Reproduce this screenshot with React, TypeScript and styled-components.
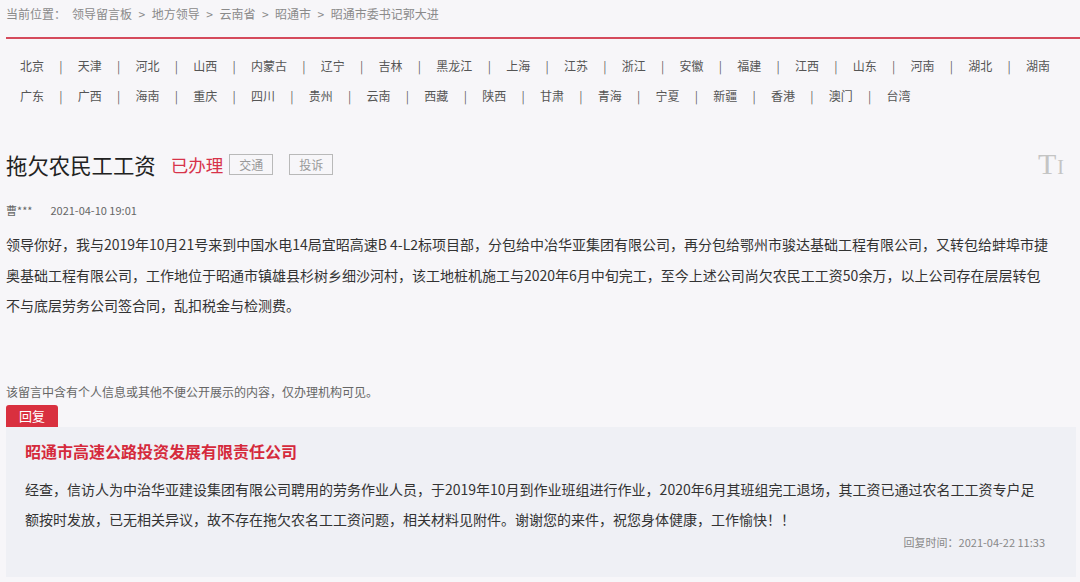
import React from "react";
import styled, { createGlobalStyle } from "styled-components";

const GlobalStyle = createGlobalStyle`
  body {
    margin: 0;
    background: #f7f6f9;
    font-family: "Noto Sans CJK SC", "Noto Sans", sans-serif;
  }
`;

const crumbs = ["领导留言板", "地方领导", "云南省", "昭通市", "昭通市委书记郭大进"];
const rowOne = ["北京", "天津", "河北", "山西", "内蒙古", "辽宁", "吉林", "黑龙江", "上海", "江苏", "浙江", "安徽", "福建", "江西", "山东", "河南", "湖北", "湖南"];
const rowTwo = ["广东", "广西", "海南", "重庆", "四川", "贵州", "云南", "西藏", "陕西", "甘肃", "青海", "宁夏", "新疆", "香港", "澳门", "台湾"];

function ProvinceRow({ names }: { names: string[] }) {
  return (
    <Row>
      {names.map((n, i) => (
        <React.Fragment key={n}>
          <Province>{n}</Province>
          {i < names.length - 1 && <Sep>|</Sep>}
        </React.Fragment>
      ))}
    </Row>
  );
}

function App() {
  return (
    <Page>
      <GlobalStyle />
      <Crumb>
        <CrumbLabel>当前位置：</CrumbLabel>
        {crumbs.map((c, i) => (
          <React.Fragment key={c}>
            {i > 0 && <Arrow>&gt;</Arrow>}
            <span>{c}</span>
          </React.Fragment>
        ))}
      </Crumb>

      <Provinces>
        <ProvinceRow names={rowOne} />
        <ProvinceRow names={rowTwo} />
      </Provinces>

      <TitleRow>
        <TitleLeft>
          <Title>拖欠农民工工资</Title>
          <Status>已办理</Status>
          <Tag>交通</Tag>
          <Tag>投诉</Tag>
        </TitleLeft>
        <FontIcon>
          <BigT>T</BigT>
          <SmallI>I</SmallI>
        </FontIcon>
      </TitleRow>

      <Meta>
        <span>曹***</span>
        <span>2021-04-10 19:01</span>
      </Meta>

      <Body>
        领导你好，我与2019年10月21号来到中国水电14局宜昭高速B 4-L2标项目部，分包给中冶华亚集团有限公司，再分包给鄂州市骏达基础工程有限公司，又转包给蚌埠市捷奥基础工程有限公司，工作地位于昭通市镇雄县杉树乡细沙河村，该工地桩机施工与2020年6月中旬完工，至今上述公司尚欠农民工工资50余万，以上公司存在层层转包
        <br />
        不与底层劳务公司签合同，乱扣税金与检测费。
      </Body>

      <Notice>该留言中含有个人信息或其他不便公开展示的内容，仅办理机构可见。</Notice>

      <ReplyTab>回复</ReplyTab>
      <ReplyBox>
        <ReplyOrg>昭通市高速公路投资发展有限责任公司</ReplyOrg>
        <ReplyText>
          经查，信访人为中治华亚建设集团有限公司聘用的劳务作业人员，于2019年10月到作业班组进行作业，2020年6月其班组完工退场，其工资已通过农名工工资专户足额按时发放，已无相关异议，故不存在拖欠农名工工资问题，相关材料见附件。谢谢您的来件，祝您身体健康，工作愉快！！
        </ReplyText>
        <ReplyTime>回复时间：2021-04-22 11:33</ReplyTime>
      </ReplyBox>
    </Page>
  );
}

export default App;

const Page = styled.div`
  padding: 0 4px 0 6px;
  width: 1080px;
  box-sizing: border-box;
`;
const Crumb = styled.div`
  height: 39px;
  padding-top: 5px;
  box-sizing: border-box;
  font-size: 12px;
  line-height: 18px;
  color: #8a8a8a;
  border-bottom: 2px solid #d54a5c;
  margin-right: -4px;
`;
const CrumbLabel = styled.span`
  margin-right: 6px;
`;
const Arrow = styled.span`
  margin: 0 6.5px;
`;
const Provinces = styled.div`
  margin-top: 11px;
  padding-left: 14px;
`;
const Row = styled.div`
  display: flex;
  align-items: center;
  height: 30px;
  font-size: 12px;
  color: #555;
`;
const Province = styled.span`
  white-space: nowrap;
`;
const Sep = styled.span`
  margin: 0 15.25px;
  color: #666;
`;
const TitleRow = styled.div`
  margin-top: 38px;
  height: 32px;
  display: flex;
  align-items: center;
  justify-content: space-between;
  padding-right: 12px;
`;
const TitleLeft = styled.div`
  display: flex;
  align-items: center;
`;
const Title = styled.h2`
  margin: 0;
  font-size: 21.4px;
  font-weight: 400;
  color: #222;
`;
const Status = styled.span`
  margin-left: 15px;
  font-size: 17.5px;
  color: #d7334a;
`;
const Tag = styled.span`
  margin-left: 6px;
  width: 42px;
  height: 19px;
  border: 1px solid #b9b9b9;
  font-size: 12px;
  line-height: 19px;
  text-align: center;
  color: #999;
  & + & {
    margin-left: 16px;
  }
`;
const FontIcon = styled.div`
  display: flex;
  align-items: baseline;
  color: #c4c4c4;
  font-family: "Liberation Serif", serif;
`;
const BigT = styled.span`
  font-size: 30px;
`;
const SmallI = styled.span`
  font-size: 20px;
  margin-left: 1px;
`;
const Meta = styled.div`
  margin-top: 22px;
  display: flex;
  gap: 18px;
  font-size: 11px;
  color: #666;
  line-height: 16px;
`;
const Body = styled.p`
  margin: 11px 0 0;
  padding-right: 20px;
  font-size: 14px;
  line-height: 30.5px;
  color: #333;
`;
const Notice = styled.p`
  margin: 63px 0 0;
  font-size: 12px;
  line-height: 16px;
  color: #666;
`;
const ReplyTab = styled.div`
  margin-top: 5px;
  width: 52px;
  height: 22px;
  background: #d9303f;
  border-radius: 3px 3px 0 0;
  color: #fff;
  font-size: 13px;
  line-height: 22px;
  padding-left: 13px;
  box-sizing: border-box;
`;
const ReplyBox = styled.div`
  background: #eff0f5;
  padding: 12px 16px 20px 19px;
  height: 150px;
  box-sizing: border-box;
`;
const ReplyOrg = styled.h3`
  margin: 0;
  font-size: 16px;
  font-weight: 700;
  line-height: 24px;
  color: #d52a3c;
`;
const ReplyText = styled.p`
  margin: 11px 0 0;
  padding-right: 20px;
  font-size: 14px;
  line-height: 30px;
  color: #333;
`;
const ReplyTime = styled.div`
  text-align: right;
  font-size: 11px;
  color: #888;
  line-height: 16px;
  margin-top: 0;
  padding-right: 15px;
`;
